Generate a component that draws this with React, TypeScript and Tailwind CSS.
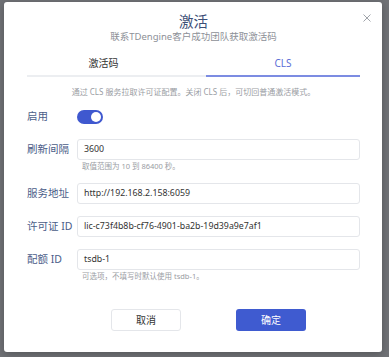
const font = { fontFamily: '"Noto Sans", "Noto Sans CJK SC", sans-serif' };

const Field = ({ label, value, hint }: { label: string; value: string; hint?: string }) => (
  <div className="mt-[12px]">
    <div className="flex items-center">
      <div className="w-[50px] shrink-0 text-[10.5px] text-[#4b5d88]">{label}</div>
      <div className="flex h-[21px] flex-1 items-center rounded-[3px] border border-[#e4e6ea] bg-white px-[6px] text-[8.8px] text-[#333]">
        {value}
      </div>
    </div>
    {hint && <div className="ml-[55px] mt-[1px] text-[7.5px] leading-[10px] text-[#9a9da3]">{hint}</div>}
  </div>
);

export default function App() {
  return (
    <div className="h-[357px] w-[389px] overflow-hidden bg-[#707276] pl-[4px] pt-[2px]" style={font}>
      <div className="relative h-[350px] w-[378px] rounded-[3px] bg-white pl-[23px] pr-[22px] pt-[10px] shadow-[0_2px_8px_rgba(0,0,0,0.25)]">
        <div className="absolute right-[11px] top-[12px] text-[#a0a4aa]">
          <svg width="8" height="8" viewBox="0 0 8 8" fill="none" stroke="currentColor" strokeWidth="1">
            <path d="M0.5 0.5L7.5 7.5M7.5 0.5L0.5 7.5" />
          </svg>
        </div>

        <div className="text-center text-[14.5px] leading-[18px] text-[#3c4f77]">激活</div>
        <div className="text-center text-[9.5px] leading-[14px] text-[#8d9097]">联系TDengine客户成功团队获取激活码</div>

        <div className="mt-[7px] flex h-[24px] items-center text-[10px]">
          <div className="w-[153px] text-center text-[#333]">激活码</div>
          <div className="flex-1 pl-[26px] text-center text-[#5b6ed6]">CLS</div>
        </div>
        <div className="flex h-[2px]">
          <div className="flex-1 bg-[#eceef1]"></div>
          <div className="w-[154px] bg-[#7c8ce2]"></div>
        </div>

        <div className="mt-[9px] text-center text-[8px] leading-[12px] text-[#9a9da3]">
          通过 CLS 服务拉取许可证配置。关闭 CLS 后，可切回普通激活模式。
        </div>

        <div className="mt-[12px] flex h-[14px] items-center">
          <div className="w-[50px] text-[10.5px] text-[#4b5d88]">启用</div>
          <div className="flex h-[14px] w-[26px] items-center justify-end rounded-full bg-[#3f58cf] pr-[2px]">
            <div className="h-[10px] w-[10px] rounded-full bg-white"></div>
          </div>
        </div>

        <div className="pt-[3px]">
          <Field label="刷新间隔" value="3600" hint="取值范围为 10 到 86400 秒。" />
        </div>
        <Field label="服务地址" value="http://192.168.2.158:6059" />
        <Field label="许可证 ID" value="lic-c73f4b8b-cf76-4901-ba2b-19d39a9e7af1" />
        <Field label="配额 ID" value="tsdb-1" hint="可选项，不填写时默认使用 tsdb-1。" />

        <div className="mt-[28px] flex gap-[55px] pl-[84px] text-[10px]">
          <button className="h-[22px] w-[70px] rounded-[3px] border border-[#e4e6ea] bg-white text-[#333]">取消</button>
          <button className="h-[22px] w-[70px] rounded-[3px] bg-[#3f5bd0] text-white">确定</button>
        </div>
      </div>
    </div>
  );
}
